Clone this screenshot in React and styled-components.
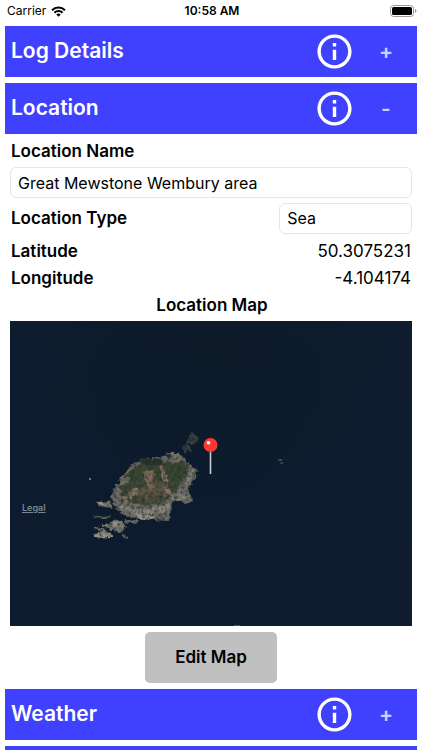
import styled, { createGlobalStyle } from 'styled-components';
import React, { useState } from 'react';
import { MdInfoOutline } from 'react-icons/md';

export default function App(){
    const [aberta, setAberta] = useState("Location");

    function alternar(title){
        setAberta(aberta === title ? "" : title);
    }

    return(
        <Screen>
            <GlobalStyle />
            <StatusBar />
            <Sections>
                <Section title="Log Details" open={aberta === "Log Details"} toggle={alternar} />
                <Section title="Location" open={aberta === "Location"} toggle={alternar}>
                    <LocationForm />
                </Section>
                <Section title="Weather" open={aberta === "Weather"} toggle={alternar} />
                <SectionHeader />
            </Sections>
        </Screen>
    );
}

function StatusBar(){
    return(
        <Status>
            <Carrier>
                Carrier
                <svg width="15" height="11" viewBox="0 0 15 11">
                    <path d="M7.5 10.8 5.3 8.5a3.2 3.2 0 0 1 4.4 0z" />
                    <path d="M3.4 6.7a5.8 5.8 0 0 1 8.2 0M1 4.2a9.3 9.3 0 0 1 13 0" fill="none" stroke="#000" strokeWidth="2.1" />
                </svg>
            </Carrier>
            <Clock>10:58 AM</Clock>
            <Battery>
                <svg width="27" height="12" viewBox="0 0 27 12">
                    <rect x="0.5" y="0.5" width="23" height="11" rx="3" fill="none" stroke="#999" />
                    <rect x="2" y="2" width="20" height="8" rx="1.6" />
                    <path d="M25 4v4c.9-.3 1.4-1.1 1.4-2S25.900 4.300 25 4z" fill="#999" />
                </svg>
            </Battery>
        </Status>
    );
}

function Section(props){
    return(
        <section>
            <SectionHeader>
                <SectionTitle>{props.title}</SectionTitle>
                <InfoButton type="button">
                    <MdInfoOutline />
                </InfoButton>
                <ToggleButton type="button" onClick={()=>props.toggle(props.title)}>
                    {props.open ? "-" : "+"}
                </ToggleButton>
            </SectionHeader>
            {props.open && props.children}
        </section>
    );
}

function LocationForm(){
    const [name, setName] = useState("Great Mewstone Wembury area");

    return(
        <Form onSubmit={(e)=>e.preventDefault()}>
            <Label htmlFor="name">Location Name</Label>
            <TextInput id="name" value={name} onChange={(e)=>setName(e.target.value)} />
            <TypeRow>
                <Label htmlFor="type">Location Type</Label>
                <Select id="type" defaultValue="Sea">
                    <option>Sea</option>
                </Select>
            </TypeRow>
            <Coordinates>
                <Row>
                    <dt>Latitude</dt>
                    <dd>50.3075231</dd>
                </Row>
                <Row>
                    <dt>Longitude</dt>
                    <dd>-4.104174</dd>
                </Row>
            </Coordinates>
            <MapTitle>Location Map</MapTitle>
            <Map>
                <SatelliteView />
                <Legal href="#legal">Legal</Legal>
            </Map>
            <EditButton type="button">Edit Map</EditButton>
        </Form>
    );
}

function SatelliteView(){
    return(
        <svg viewBox="0 0 402 305" preserveAspectRatio="xMidYMid slice">
            <defs>
                <radialGradient id="shade" cx="0.5" cy="0.1" r="0.5">
                    <stop offset="0" stopColor="#0c1820" stopOpacity="0.5" />
                    <stop offset="1" stopColor="#0c1820" stopOpacity="0" />
                </radialGradient>
                <radialGradient id="shallow" cx="0.45" cy="0.5" r="0.6">
                    <stop offset="0" stopColor="#0a1a2e" stopOpacity="0.7" />
                    <stop offset="1" stopColor="#0a1a2e" stopOpacity="0" />
                </radialGradient>
                <filter id="rugged" x="-10%" y="-10%" width="120%" height="120%" colorInterpolationFilters="sRGB">
                    <feTurbulence type="fractalNoise" baseFrequency="0.2" numOctaves="3" seed="4" result="noise" />
                    <feDisplacementMap in="SourceGraphic" in2="noise" scale="6" xChannelSelector="R" yChannelSelector="G" result="land" />
                    <feTurbulence type="fractalNoise" baseFrequency="0.28" numOctaves="3" seed="9" />
                    <feColorMatrix values="0 0 0 0 0.12  0 0 0 0 0.15  0 0 0 0 0.15  1.6 0 0 0 -0.65" />
                    <feComposite in2="land" operator="in" result="grain" />
                    <feMerge result="ground">
                        <feMergeNode in="land" />
                        <feMergeNode in="grain" />
                    </feMerge>
                    <feGaussianBlur in="ground" stdDeviation="0.5" />
                </filter>
            </defs>
            <rect width="402" height="305" fill="#0f1c2f" />
            <rect width="402" height="305" fill="url(#shallow)" />
            <rect width="402" height="305" fill="url(#shade)" />

            {/* island: rock shelf, then grass, then bare soil */}
            <g filter="url(#rugged)">
                <g transform="translate(70 100) scale(0.3333)">
                    <path fill="#6c6b64" d="M128 162 150 135 182 118 204 108 248 108 262 96 300 95 312 108 324 124 352 148 348 168 330 192 326 212 342 240 312 246 282 238 274 262 264 300 230 298 196 292 158 290 126 278 104 262 52 254 62 242 94 238 100 200 116 184z" />
                    <path fill="#7a7770" d="M44 320 60 308 90 310 104 294 132 306 140 318 118 336 96 328 102 348 42 348 62 332z" />
                    <path fill="#626760" d="M36 282 60 286 92 284 90 294 60 296zM134 294l44 4-6 10-36-4zM126 338l20 8-6 8-14-6z" />
                    <path fill="#353f41" d="M304 74 326 72 336 86 316 98zM322 68l6-28 22 0 8 14-18 12z" />
                    <path fill="#3f4836" d="M120 206 132 168 158 142 190 124 246 122 312 122 326 140 322 164 300 190 284 212 262 236 230 250 190 254 156 244 130 236z" />
                    <path fill="#29342f" d="M170 118 208 108 246 118 238 132 196 132zM250 102 274 100 290 110 262 112z" />
                    <path fill="#5c5544" d="M184 196 230 180 260 190 274 212 262 230 234 222 208 236 172 238 162 220z" />
                    <path fill="#434f36" d="M164 242 200 244 240 226 262 236 230 250 190 254z" />
                    <path fill="#7a6957" d="M188 152 222 148 224 166 210 186 230 198 206 202 194 176z" />
                    <path fill="#8a7461" d="M128 230 164 202 176 210 150 236zM256 198l22 16-4 12-20-16zM238 134l8-2 16 46-6 12z" />
                    <path fill="#36482f" d="M260 136 308 126 320 146 302 176 282 186 264 160zM146 152l36-6 6 18-22 18-30 6zM224 144l14-4 12 34-18 4z" />
                    <path fill="#87827a" d="M106 246 142 258 192 266 232 254 272 250 258 274 220 280 170 280 136 272zM276 218l46 0-8 18-34 2zM322 136l22 12-12 28-16 10z" />
                    <path fill="#77746a" d="M126 168 152 174 142 190 118 194zM266 96l36 0 2 16-22 0z" />
                    <path fill="#97938a" d="M42 338 90 336 100 348 42 350zM92 304l28 2-14 12zM52 242l30 2 8 10-36-2zM168 280l54 6-4 10-42-4z" />
                    <path stroke="#0d1929" strokeWidth="6" fill="none" d="M52 310 80 326 100 336M28 300 112 288 130 290M88 228l16 36" />
                </g>
            </g>
            <ellipse cx="80" cy="158" rx="1" ry="1" fill="#8794a0" />
            <path d="M267 139l4-1 2 1-3 1zM269 142l5-1-2 2z" fill="#4a5864" />
            <path d="M224 304.500h6" stroke="#4b5763" />

            <path d="M200.500 130v23" stroke="#c9ccd0" strokeWidth="1.600" />
            <circle cx="200.500" cy="124" r="7" fill="#fc3a30" />
            <circle cx="198.500" cy="121.800" r="1.800" fill="#fff" />
        </svg>
    );
}

const GlobalStyle = createGlobalStyle`
    body{
        margin: 0;
        background: #FFFFFF;
        color: #000000;
        font-family: Inter, 'Liberation Sans', sans-serif;
        font-size: 17px;
        line-height: 27px;
    }
    *{
        box-sizing: border-box;
    }
    button, input, select{
        font: inherit;
        color: inherit;
    }
`;

const Screen = styled.div`
    height: 100vh;
    display: flex;
    flex-direction: column;
`;

const Status = styled.header`
    display: grid;
    grid-template-columns: 1fr auto 1fr;
    align-items: center;
    height: 26px;
    padding: 0 5px 4px 7px;
    font-size: 12px;
    line-height: 22px;
`;

const Carrier = styled.div`
    display: flex;
    align-items: center;
    gap: 5px;
`;

const Clock = styled.div`
    font-weight: 600;
`;

const Battery = styled.div`
    display: flex;
    justify-content: flex-end;
`;

const Sections = styled.main`
    flex: 1;
    min-height: 0;
    overflow-y: auto;
    scrollbar-width: none;
    display: flex;
    flex-direction: column;
    gap: 6px;
    padding: 0 5px;
`;

const SectionHeader = styled.div`
    display: flex;
    align-items: center;
    flex-shrink: 0;
    height: 51px;
    padding: 0 5px;
    background: #4040FF;
    color: #FFFFFF;
`;

const SectionTitle = styled.h2`
    flex: 1;
    margin: 0;
    padding: 0 1px 2px;
    font-size: 21px;
    font-weight: 600;
`;

const InfoButton = styled.button`
    display: flex;
    padding: 0;
    border: none;
    background: none;
    font-size: 41px;
`;

const ToggleButton = styled.button`
    width: 52px;
    margin-left: 5px;
    padding: 0;
    border: none;
    background: none;
    color: #CFCFFF;
    font-size: 21px;
    font-weight: 600;
`;

const Form = styled.form`
    display: flex;
    flex-direction: column;
    padding: 4px 5px 0;
`;

const Label = styled.label`
    padding: 0 1px;
    font-weight: 600;
`;

const TextInput = styled.input`
    width: 100%;
    height: 31px;
    margin-top: 2px;
    padding: 0 7px;
    border: 1px solid #E6E6E6;
    border-radius: 6px;
    background: #FFFFFF;
    font-size: 16px;
`;

const TypeRow = styled.div`
    display: flex;
    align-items: center;
    justify-content: space-between;
    margin: 5px 0 4px;
`;

const Select = styled.select`
    appearance: none;
    width: 33%;
    height: 31px;
    padding: 0 7px;
    border: 1px solid #E6E6E6;
    border-radius: 6px;
    background: #FFFFFF;
    font-size: 16px;
`;

const Coordinates = styled.dl`
    margin: 0;
`;

const Row = styled.div`
    display: flex;
    justify-content: space-between;
    padding: 0 1px;

    dt{
        font-weight: 600;
    }
    dd{
        margin: 0;
    }
`;

const MapTitle = styled.h3`
    margin: 0 0 2px;
    padding-left: 2px;
    font-size: 17px;
    font-weight: 600;
    text-align: center;
`;

const Map = styled.div`
    position: relative;
    aspect-ratio: 402 / 305;

    svg{
        display: block;
        width: 100%;
        height: 100%;
    }
`;

const Legal = styled.a`
    position: absolute;
    left: 12px;
    bottom: 111px;
    color: #7C858F;
    font-size: 9px;
    font-weight: 600;
    line-height: 14px;
`;

const EditButton = styled.button`
    align-self: center;
    width: 33%;
    height: 51px;
    margin-top: 6px;
    border: none;
    border-radius: 5px;
    background: #C0C0C0;
    font-weight: 600;
`;
